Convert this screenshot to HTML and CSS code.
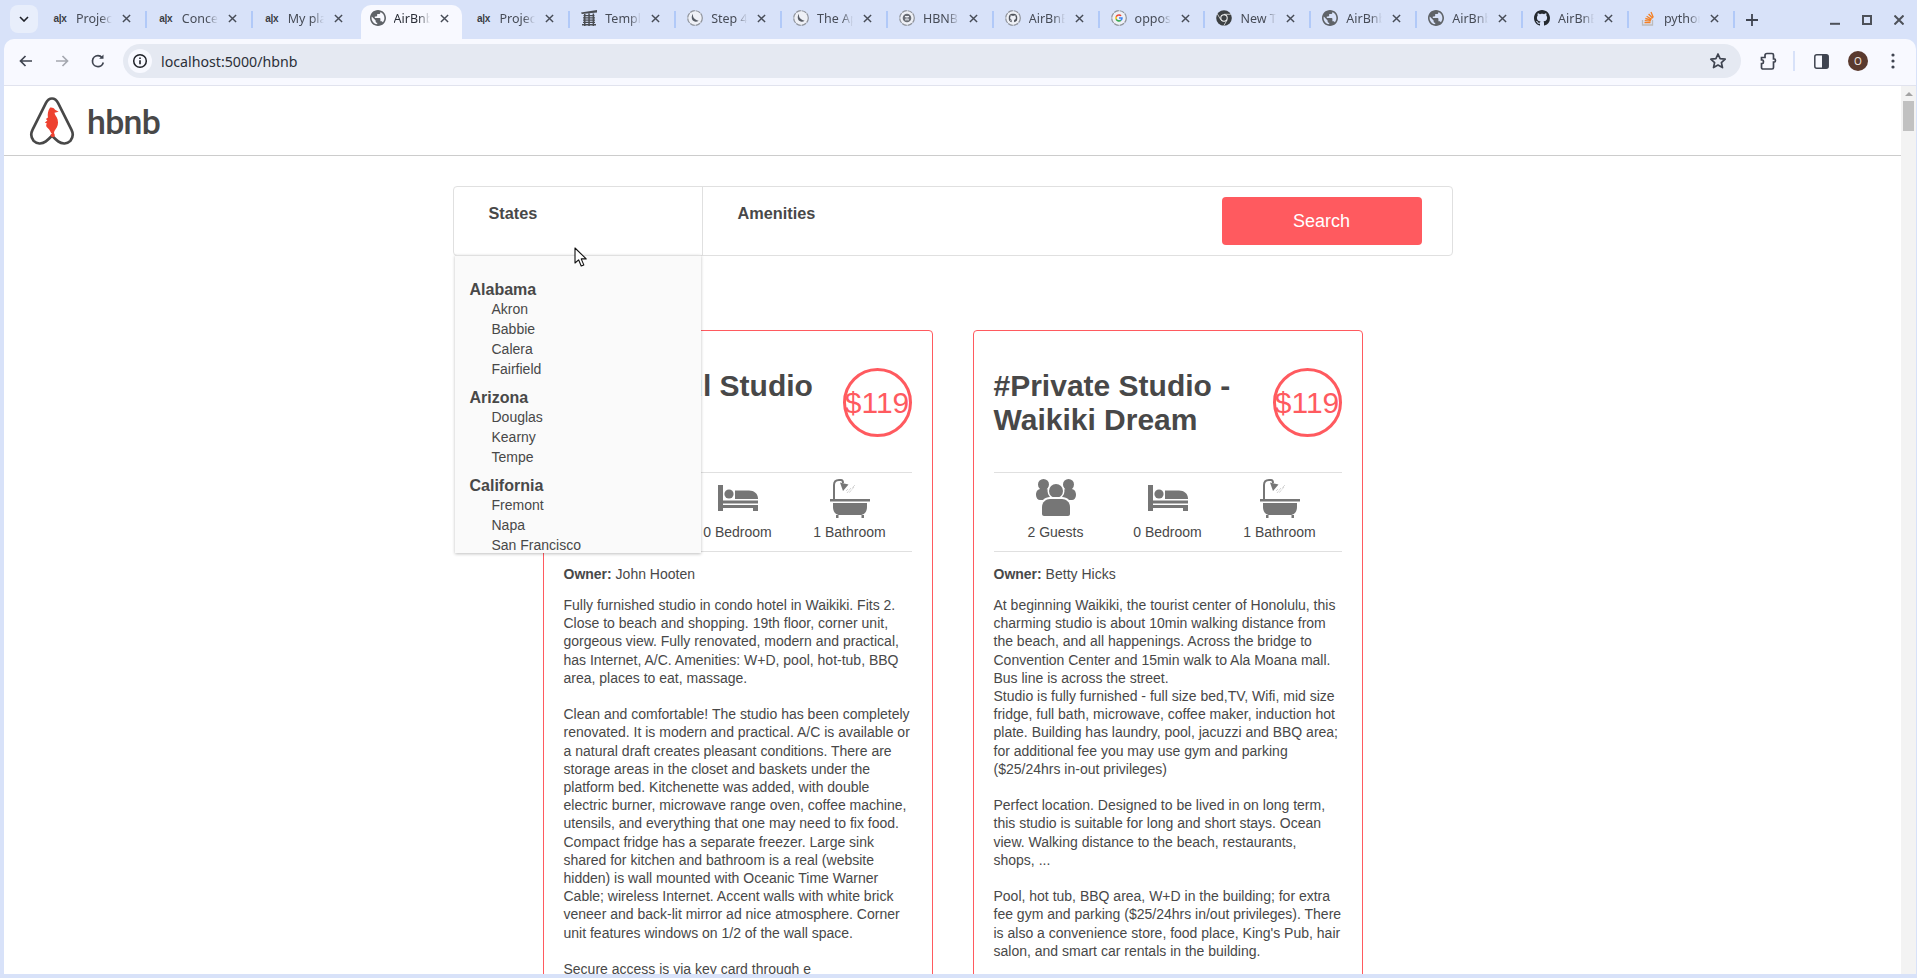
FILE: index.html
```html
<!DOCTYPE html>
<html lang="en">
<head>
  <meta charset="UTF-8">
  <title>HBnB</title>
  <link rel="stylesheet" href="styles.css">
</head>
<body>
  <!-- shared favicon shapes -->
  <svg class="sprite" width="0" height="0">
    <symbol id="globe" viewBox="2 2 20 20"><path fill-rule="evenodd" d="M12 2C6.48 2 2 6.48 2 12s4.48 10 10 10 10-4.48 10-10S17.52 2 12 2zm-1 17.93c-3.95-.49-7-3.85-7-7.93 0-.62.08-1.21.21-1.79L9 15v1c0 1.1.9 2 2 2v1.93zm6.9-2.54c-.26-.81-1-1.39-1.9-1.39h-1v-3c0-.55-.45-1-1-1H8v-2h2c.55 0 1-.45 1-1V7h2c1.1 0 2-.9 2-2v-.41c2.93 1.19 5 4.06 5 7.41 0 2.08-.8 3.97-2.1 5.39z"/></symbol>
    <symbol id="github" viewBox="0 0 16 16"><path d="M8 0C3.58 0 0 3.58 0 8c0 3.54 2.29 6.53 5.47 7.59.4.07.55-.17.55-.38 0-.19-.01-.82-.01-1.49-2.01.37-2.53-.49-2.69-.94-.09-.23-.48-.94-.82-1.13-.28-.15-.68-.52-.01-.53.63-.01 1.08.58 1.23.82.72 1.21 1.87.87 2.33.66.07-.52.28-.87.51-1.07-1.78-.2-3.64-.89-3.64-3.95 0-.87.31-1.59.82-2.15-.08-.2-.36-1.02.08-2.12 0 0 .67-.21 2.2.82.64-.18 1.32-.27 2-.27.68 0 1.36.09 2 .27 1.53-1.04 2.2-.82 2.2-.82.44 1.1.16 1.92.08 2.12.51.56.82 1.27.82 2.15 0 3.07-1.87 3.75-3.65 3.95.29.25.54.73.54 1.48 0 1.07-.01 1.93-.01 2.2 0 .21.15.46.55.38A8.013 8.013 0 0016 8c0-4.42-3.58-8-8-8z"/></symbol>
    <symbol id="ring" viewBox="0 0 16 16"><circle cx="8" cy="8" r="7.3" fill="#eef0f6" stroke="#8f939b" stroke-width="1.2" stroke-dasharray="5 .8"/></symbol>
    <symbol id="moon" viewBox="0 0 16 16"><use href="#ring"/><path d="M6 3.8c-.5 3 .9 6 5.6 6.9-2 1.6-5.2 1.2-6.4-1.2-.9-1.9-.4-4.4.8-5.7z" fill="#555a63"/></symbol>
    <symbol id="close" viewBox="0 0 10 10"><path d="M1 1l8 8M9 1l-8 8" fill="none" stroke="#474c57" stroke-width="1.6"/></symbol>
    <symbol id="guests" viewBox="0 0 40 40">
      <circle cx="7.5" cy="5.5" r="5.5"/><circle cx="32.5" cy="5.5" r="5.5"/>
      <path d="M0 16c0-4 2-6 5-6h5c2 0 4 2 4 5v6H4c-2 0-4-2-4-5zM40 16c0-4-2-6-5-6h-5c-2 0-4 2-4 5v6h10c2 0 4-2 4-5z"/>
      <circle cx="20" cy="12" r="8.5" fill="#fff"/><circle cx="20" cy="12" r="7"/>
      <path d="M4 37V28c0-6 5-10 10-10h12c5 0 10 4 10 10v9z" fill="#fff"/>
      <path d="M6 35V28c0-5 4-8 8-8h12c4 0 8 3 8 8v7c0 1-1 2-2 2H8c-1 0-2-1-2-2z"/>
    </symbol>
    <symbol id="bed" viewBox="0 0 40 40">
      <path d="M0 6h5v20h35v6h-5v-3H5v3H0z"/><circle cx="11" cy="15" r="4.6"/>
      <path d="M17 11.500h14c5 0 9 3 9 8v.5H17zM5 21.500h35v3H5z"/>
    </symbol>
    <symbol id="bath" viewBox="0 0 40 40">
      <path d="M0 20h40v2.500H0zM3 24h34v4c0 5-3 8-7 8H10c-4 0-7-3-7-8zM6 36h2.500v3H6zM31.500 36h2.500v3h-2.500z"/>
      <path d="M4 20V6c0-3 2-5 5-5h2c1 0 2 1 2 3" fill="none" stroke="#767676" stroke-width="2"/>
      <path fill="#767676" d="M10 3.500L18.500 5.500L13 12Z"/>
      <path d="M18 10l-2 2M21 9l-4 5M24 8l-5 6M25 6l-3 3" fill="none" stroke="#b5b5b5" stroke-width=".8" stroke-dasharray="1 .8"/>
    </symbol>
  </svg>

  <div class="tabstrip">
    <button class="tab-search"><svg width="10" height="6" viewBox="0 0 10 6"><path d="M1 1l4 4 4-4" fill="none" stroke="#1f2128" stroke-width="1.600"/></svg></button>
    <div class="tab"><span class="alx">a|x</span><span class="tab-title">Projec</span><svg class="tab-close"><use href="#close"/></svg></div>
    <div class="tab"><span class="alx">a|x</span><span class="tab-title">Conce</span><svg class="tab-close"><use href="#close"/></svg></div>
    <div class="tab no-line"><span class="alx">a|x</span><span class="tab-title">My pla</span><svg class="tab-close"><use href="#close"/></svg></div>
    <div class="tab active no-line"><svg class="favicon gray"><use href="#globe"/></svg><span class="tab-title">AirBnb</span><svg class="tab-close"><use href="#close"/></svg></div>
    <div class="tab"><span class="alx">a|x</span><span class="tab-title">Projec</span><svg class="tab-close"><use href="#close"/></svg></div>
    <div class="tab">
      <svg class="favicon" viewBox="0 0 16 16"><path fill="#4a4d52" d="M0 2.500L16 0v2.400L.8 4zM2.500 5h11v1.300h-11zM2 7.300h12v1.200H2zM2 9.500h12v1.200H2zM2 11.700h12v1.200H2zM1 14h14v1.600H1zM3 4h1.500v12H3zM7.300 3.500h1.500V16H7.300zM11.600 3.500h1.500V16h-1.500z"/></svg>
      <span class="tab-title">Templ</span><svg class="tab-close"><use href="#close"/></svg>
    </div>
    <div class="tab"><svg class="favicon"><use href="#moon"/></svg><span class="tab-title">Step 4</span><svg class="tab-close"><use href="#close"/></svg></div>
    <div class="tab"><svg class="favicon"><use href="#moon"/></svg><span class="tab-title">The Ap</span><svg class="tab-close"><use href="#close"/></svg></div>
    <div class="tab">
      <svg class="favicon" viewBox="0 0 16 16"><use href="#ring"/><circle cx="8" cy="8" r="4.300" fill="#6a6e75"/><path d="M6 6.500h4M6.500 8h3M6 9.800h4" stroke="#eef0f6" stroke-width="1"/></svg>
      <span class="tab-title">HBNB</span><svg class="tab-close"><use href="#close"/></svg>
    </div>
    <div class="tab">
      <svg class="favicon" viewBox="0 0 16 16"><use href="#ring"/><use href="#github" x="3.500" y="3.500" width="9" height="9" fill="#4f535a"/></svg>
      <span class="tab-title">AirBnB</span><svg class="tab-close"><use href="#close"/></svg>
    </div>
    <div class="tab">
      <svg class="favicon" viewBox="0 0 16 16"><use href="#ring"/><path d="M8 4.200a3.800 3.800 0 012.600 1L9.500 6.300A2.200 2.200 0 005.900 7.300L4.600 6.300A3.800 3.800 0 018 4.200z" fill="#ea4335"/><path d="M4.600 6.300l1.300 1a2.300 2.300 0 000 1.400l-1.300 1a3.800 3.800 0 010-3.400z" fill="#fbbc05"/><path d="M4.600 9.700l1.300-1A2.200 2.200 0 009.300 9.800l1.200 1A3.800 3.800 0 014.600 9.700z" fill="#34a853"/><path d="M8 7.300h3.700c.2 1.400-.2 2.600-1.200 3.500l-1.200-1c.4-.3.700-.6.800-1.100H8z" fill="#4285f4"/></svg>
      <span class="tab-title">oppos</span><svg class="tab-close"><use href="#close"/></svg>
    </div>
    <div class="tab">
      <svg class="favicon" viewBox="0 0 16 16"><circle cx="8" cy="8" r="7.800" fill="#3c4043"/><circle cx="8" cy="8" r="3.700" fill="#fff"/><circle cx="8" cy="8" r="2.700" fill="#3c4043"/><path d="M8 4.300h6.800M4.800 9.800L1.400 4M11.200 9.800L7.800 15.700" stroke="#fff" stroke-width=".7"/></svg>
      <span class="tab-title">New T</span><svg class="tab-close"><use href="#close"/></svg>
    </div>
    <div class="tab"><svg class="favicon gray"><use href="#globe"/></svg><span class="tab-title">AirBnb</span><svg class="tab-close"><use href="#close"/></svg></div>
    <div class="tab"><svg class="favicon gray"><use href="#globe"/></svg><span class="tab-title">AirBnb</span><svg class="tab-close"><use href="#close"/></svg></div>
    <div class="tab"><svg class="favicon dark"><use href="#github"/></svg><span class="tab-title">AirBnB</span><svg class="tab-close"><use href="#close"/></svg></div>
    <div class="tab">
      <svg class="favicon" viewBox="0 0 16 16"><path d="M2.500 10v5h10v-5" fill="none" stroke="#bcbbbb" stroke-width="1.300"/><path d="M4.500 12.700h6M4.700 10.600l6 .5M5.300 8.500l5.800 1.500M6.600 6.200l5.100 3M8.600 4l4.100 4.300M11 2l2.300 5.500" fill="none" stroke="#f48024" stroke-width="1.300"/></svg>
      <span class="tab-title">python</span><svg class="tab-close"><use href="#close"/></svg>
    </div>
    <svg class="new-tab" width="12" height="12" viewBox="0 0 12 12"><path d="M6 0v12M0 6h12" stroke="#3f4450" stroke-width="1.800"/></svg>
    <div class="win-buttons">
      <svg width="10" height="10" viewBox="0 0 10 10"><path d="M0 8.800h10" stroke="#4d5159" stroke-width="2"/></svg>
      <svg width="10" height="10" viewBox="0 0 10 10"><path d="M1 1h8v8H1z" fill="none" stroke="#4d5159" stroke-width="2"/></svg>
      <svg width="10" height="10" viewBox="0 0 10 10"><path d="M.5.500l9 9M9.500.500l-9 9" stroke="#4d5159" stroke-width="2"/></svg>
    </div>
  </div>

  <div class="toolbar">
    <svg class="nav-icon back" viewBox="0 0 16 16"><path d="M14 8H3M7.500 3L2.500 8l5 5" fill="none" stroke="#3f4450" stroke-width="1.700"/></svg>
    <svg class="nav-icon" viewBox="0 0 16 16"><path d="M2 8h11M8.500 3l5 5-5 5" fill="none" stroke="#a5a8b0" stroke-width="1.700"/></svg>
    <svg class="nav-icon reload" viewBox="0 0 16 16"><path d="M13.300 9.500A5.500 5.500 0 118 2.600c1.800 0 3.200.9 4.300 2.100" fill="none" stroke="#3f4450" stroke-width="1.700"/><path d="M13.500 1.500v4.300H9.200z" fill="#3f4450"/></svg>
    <div class="omnibox">
      <span class="site-info"><svg width="16" height="16" viewBox="0 0 16 16"><circle cx="8" cy="8" r="6.300" fill="none" stroke="#1f2128" stroke-width="1.500"/><path d="M8 7.200v4M8 4.500v1.500" stroke="#1f2128" stroke-width="1.600"/></svg></span>
      <span class="url">localhost:5000/hbnb</span>
      <svg class="star" width="18" height="18" viewBox="0 0 18 18"><path d="M9 2l2.100 4.700 5.100.5-3.800 3.400 1.100 5L9 13l-4.500 2.600 1.100-5-3.800-3.400 5.100-.5z" fill="none" stroke="#3f4450" stroke-width="1.700" stroke-linejoin="round"/></svg>
    </div>
    <svg class="ext" width="18" height="18" viewBox="0 0 18 18"><path d="M2.500 5.500h3.500V3.500c0-1.500 1-2 2-2H13c.8 0 1.500.7 1.500 1.500v4h1c1.300 0 1.300 3 0 3h-1v5.500c0 .8-.7 1.500-1.500 1.500H4c-.8 0-1.500-.7-1.500-1.500v-4h1c1.300 0 1.300-3.500 0-3.500h-1z" fill="none" stroke="#3f4450" stroke-width="1.700"/></svg>
    <span class="tool-sep"></span>
    <svg class="panel" width="15" height="15" viewBox="0 0 15 15"><rect x=".8" y=".8" width="13.400" height="13.400" rx="2" fill="none" stroke="#3f4450" stroke-width="1.500"/><rect x="8" y="1" width="6" height="13" fill="#3f4450"/></svg>
    <span class="avatar">O</span>
    <svg class="dots" width="4" height="16" viewBox="0 0 4 16"><circle cx="2" cy="2" r="1.600"/><circle cx="2" cy="8" r="1.600"/><circle cx="2" cy="14" r="1.600"/></svg>
  </div>

  <div class="viewport">
    <div class="page">
      <header class="site-header">
        <svg class="logo-mark" width="46" height="48" viewBox="0 0 44 47">
          <path d="M22 1.500C19 1.500 17.500 3 16 6L3 32C1 36 1.500 40 4 43C7 46 12 46.500 16 43.500C18 42 20 40 22 38C24 40 26 42 28 43.500C32 46.500 37 46 40 43C42.500 40 43 36 41 32L28 6C26.500 3 25 1.500 22 1.500Z" fill="none" stroke="#484848" stroke-width="2.600"/>
          <path d="M20 10.500C22 10 24 11 25 12.500L28.500 14.500L24.500 15.500C24.500 17.500 26.500 19 27.500 22C28.500 26 27.500 29 25.500 31.500C24 33.500 23.500 35 24.500 36.500C25.500 38.500 23.500 40 21.500 39C19.800 38 20.500 35.800 22 36.200C20.500 34.500 20 32 17.500 30C16 28.800 16 27.500 17 26L15 25L17.500 23L16 21.500L18 20C17.500 17 18 13 20 10.500Z" fill="#ee4130"/>
        </svg>
        <span class="logo-text">hbnb</span>
      </header>

      <section class="filters">
        <div class="locations">
          <h3>States</h3>
          <div class="popover">
            <h4>Alabama</h4>
            <ul>
              <li>Akron</li>
              <li>Babbie</li>
              <li>Calera</li>
              <li>Fairfield</li>
            </ul>
            <h4>Arizona</h4>
            <ul>
              <li>Douglas</li>
              <li>Kearny</li>
              <li>Tempe</li>
            </ul>
            <h4>California</h4>
            <ul>
              <li>Fremont</li>
              <li>Napa</li>
              <li>San Francisco</li>
            </ul>
          </div>
        </div>
        <div class="amenities">
          <h3>Amenities</h3>
        </div>
        <button class="search-btn">Search</button>
        <svg class="cursor" width="14" height="21" viewBox="0 0 14 21"><path d="M1 1v15l3.600-3.200 2.600 6.200 2.600-1.100-2.600-6h5z" fill="#fff" stroke="#111" stroke-width="1.100" stroke-linejoin="round"/></svg>
      </section>

      <section class="places">
        <article class="place">
          <div class="title-box">
            <h2>Wonderful Studio</h2>
            <div class="price">$119</div>
          </div>
          <div class="information">
            <div class="info-item"><svg class="info-icon"><use href="#guests"/></svg>2 Guests</div>
            <div class="info-item"><svg class="info-icon"><use href="#bed"/></svg>0 Bedroom</div>
            <div class="info-item"><svg class="info-icon"><use href="#bath"/></svg>1 Bathroom</div>
          </div>
          <div class="user"><b>Owner:</b> John Hooten</div>
          <div class="description">
            Fully furnished studio in condo hotel in Waikiki. Fits 2. Close to beach and shopping. 19th floor, corner unit, gorgeous view. Fully renovated, modern and practical, has Internet, A/C. Amenities: W+D, pool, hot-tub, BBQ area, places to eat, massage.<br><br>
            Clean and comfortable! The studio has been completely renovated. It is modern and practical. A/C is available or a natural draft creates pleasant conditions. There are storage areas in the closet and baskets under the platform bed. Kitchenette was added, with double electric burner, microwave range oven, coffee machine, utensils, and everything that one may need to fix food. Compact fridge has a separate freezer. Large sink shared for kitchen and bathroom is a real (website hidden) is wall mounted with Oceanic Time Warner Cable; wireless Internet. Accent walls with white brick veneer and back-lit mirror ad nice atmosphere. Corner unit features windows on 1/2 of the wall space.<br><br>
            Secure access is via key card through e
          </div>
        </article>

        <article class="place">
          <div class="title-box">
            <h2>#Private Studio - Waikiki Dream</h2>
            <div class="price">$119</div>
          </div>
          <div class="information">
            <div class="info-item"><svg class="info-icon"><use href="#guests"/></svg>2 Guests</div>
            <div class="info-item"><svg class="info-icon"><use href="#bed"/></svg>0 Bedroom</div>
            <div class="info-item"><svg class="info-icon"><use href="#bath"/></svg>1 Bathroom</div>
          </div>
          <div class="user"><b>Owner:</b> Betty Hicks</div>
          <div class="description">
            At beginning Waikiki, the tourist center of Honolulu, this charming studio is about 10min walking distance from the beach, and all happenings. Across the bridge to Convention Center and 15min walk to Ala Moana mall. Bus line is across the street.<br>
            Studio is fully furnished - full size bed,TV, Wifi, mid size fridge, full bath, microwave, coffee maker, induction hot plate. Building has laundry, pool, jacuzzi and BBQ area; for additional fee you may use gym and parking ($25/24hrs in-out privileges)<br><br>
            Perfect location. Designed to be lived in on long term, this studio is suitable for long and short stays. Ocean view. Walking distance to the beach, restaurants, shops, ...<br><br>
            Pool, hot tub, BBQ area, W+D in the building; for extra fee gym and parking ($25/24hrs in/out privileges). There is also a convenience store, food place, King's Pub, hair salon, and smart car rentals in the building.
          </div>
        </article>
      </section>
    </div>

    <div class="scrollbar">
      <span class="scroll-arrow"></span>
      <span class="scroll-thumb"></span>
    </div>
  </div>
</body>
</html>
```

FILE: styles.css
```css
* {
  box-sizing: border-box;
}

html, body {
  height: 100%;
}

body {
  margin: 0;
  height: 978px;
  overflow: hidden;
  display: flex;
  flex-direction: column;
  background-color: #d8e2f9;
  font-family: "Liberation Sans", Arial, sans-serif;
  color: #484848;
}

.sprite {
  position: absolute;
}

/* browser chrome */
.tabstrip {
  height: 39px;
  flex-shrink: 0;
  display: flex;
  align-items: stretch;
  padding-left: 10px;
  font-family: "Noto Sans", sans-serif;
}

.tab-search {
  width: 28px;
  height: 28px;
  margin: 5px 3px 0 0;
  padding: 0;
  border: none;
  border-radius: 8px;
  background-color: #e8eefb;
  display: flex;
  align-items: center;
  justify-content: center;
}

.tab {
  width: 105.87px;
  flex-shrink: 0;
  display: flex;
  align-items: center;
  padding-left: 11px;
  padding-bottom: 3px;
  position: relative;
  font-size: 12.5px;
  color: #474c57;
}

.tab::after {
  content: "";
  position: absolute;
  right: 0;
  top: 11px;
  width: 2px;
  height: 17px;
  background-color: #b1c9f8;
}

.tab.no-line::after {
  display: none;
}

.tab.active {
  margin: 5px 2px 0;
  width: 101.87px;
  padding-left: 9px;
  padding-bottom: 8px;
  border-radius: 10px 10px 0 0;
  background-color: #f8f9ff;
  color: #2b2f38;
}

.favicon {
  width: 16px;
  height: 16px;
  flex-shrink: 0;
}

.favicon.gray {
  fill: #5f6368;
}

.favicon.dark {
  fill: #24292f;
}

.alx {
  width: 16px;
  flex-shrink: 0;
  font-family: "Liberation Sans", sans-serif;
  font-size: 10px;
  font-weight: bold;
  letter-spacing: -0.3px;
  text-align: center;
  color: #3a3d44;
}

.tab-title {
  width: 41px;
  margin-left: 8px;
  overflow: hidden;
  white-space: nowrap;
  -webkit-mask-image: linear-gradient(to right, #000 60%, transparent 88%);
  mask-image: linear-gradient(to right, #000 60%, transparent 88%);
}

.tab-close {
  width: 9px;
  height: 9px;
  margin-left: 5px;
  flex-shrink: 0;
}

.new-tab {
  align-self: center;
  margin-left: 11px;
}

.win-buttons {
  margin-left: auto;
  padding-right: 13px;
  display: flex;
  align-items: center;
  gap: 22px;
}

.toolbar {
  height: 47px;
  flex-shrink: 0;
  margin-left: 4px;
  margin-right: 1px;
  padding-left: 13px;
  padding-bottom: 2px;
  display: flex;
  align-items: center;
  background-color: #f8f9ff;
  border-bottom: 1px solid #e1e3ee;
  border-radius: 10px 10px 0 0;
}

.nav-icon {
  width: 16px;
  height: 16px;
  margin-right: 21px;
  flex-shrink: 0;
}

.nav-icon.back {
  margin-left: 1px;
  margin-right: 20px;
}

.nav-icon.reload {
  margin-left: -1px;
  margin-right: 22px;
}

.omnibox {
  width: 1618px;
  height: 34px;
  margin-left: -5px;
  padding: 0 14px 0 5px;
  display: flex;
  align-items: center;
  border-radius: 17px;
  background-color: #e5e9f2;
  font-family: "Noto Sans", sans-serif;
  font-size: 14.2px;
  color: #2b2f38;
}

.site-info {
  width: 24px;
  height: 24px;
  border-radius: 50%;
  background-color: #f8f9ff;
  display: flex;
  align-items: center;
  justify-content: center;
}

.url {
  margin-left: 9px;
}

.star {
  margin-left: auto;
}

.ext {
  margin-left: 18px;
}

.tool-sep {
  width: 2px;
  height: 20px;
  margin-left: 16px;
  background-color: #d8e2f9;
}

.panel {
  margin-left: 19px;
}

.avatar {
  width: 20px;
  height: 20px;
  margin-left: 19px;
  border-radius: 50%;
  background-color: #5a3a2e;
  color: #f4e9e2;
  font-family: "Noto Sans", sans-serif;
  font-size: 10px;
  line-height: 20px;
  text-align: center;
}

.dots {
  margin-left: 23px;
  fill: #3f4450;
}

.viewport {
  height: 888px;
  flex-shrink: 0;
  margin-left: 4px;
  margin-right: 1px;
  display: flex;
  overflow: hidden;
  background-color: #ffffff;
}

.page {
  flex: 1;
  min-width: 0;
}

.scrollbar {
  width: 15px;
  flex-shrink: 0;
  padding-top: 6px;
  background-color: #f3f3f3;
  display: flex;
  flex-direction: column;
  align-items: center;
}

.scroll-arrow {
  width: 0;
  height: 0;
  border-left: 4px solid transparent;
  border-right: 4px solid transparent;
  border-bottom: 4px solid #a3a3a3;
}

.scroll-thumb {
  width: 11px;
  height: 30px;
  margin-top: 5px;
  background-color: #c1c1c1;
}

/* hbnb page */
.site-header {
  height: 70px;
  padding: 11px 0 0 25px;
  display: flex;
  align-items: flex-start;
  border-bottom: 1px solid #cccccc;
}

.logo-text {
  margin: 1px 0 0 12px;
  font-family: Roboto, sans-serif;
  font-size: 34px;
  font-weight: 500;
  letter-spacing: -0.7px;
  line-height: 48px;
  color: #484848;
}

.filters {
  width: 1000px;
  height: 70px;
  margin: 30px auto 0;
  display: flex;
  align-items: center;
  position: relative;
  border: 1px solid #e0e0e0;
  border-radius: 4px;
  background-color: #ffffff;
}

.filters h3 {
  margin: 0;
  font-size: 16.3px;
  line-height: 18px;
  color: #484848;
}

.locations, .amenities {
  align-self: stretch;
  padding: 17px 0 0 35px;
}

.locations {
  width: 249px;
  position: relative;
  border-right: 1px solid #e0e0e0;
}

.amenities {
  flex: 1;
}

.popover {
  position: absolute;
  top: 100%;
  left: 1px;
  width: 246px;
  height: 298px;
  padding: 24px 15px 0;
  overflow: hidden;
  z-index: 5;
  background-color: #fafafa;
  border-top: 1px solid #e0e0e0;
  box-shadow: 0 1px 3px rgba(0, 0, 0, 0.25);
}

.popover h4 {
  margin: 0;
  font-size: 16px;
  line-height: 19px;
  color: #484848;
}

.popover ul {
  list-style: none;
  margin: 0 0 9px;
  padding: 0 0 0 22px;
}

.popover li {
  font-size: 14px;
  line-height: 20px;
}

.search-btn {
  width: 200px;
  height: 48px;
  margin-right: 30px;
  border: none;
  border-radius: 4px;
  background-color: #ff5a5f;
  color: #ffffff;
  font-family: inherit;
  font-size: 18px;
  cursor: pointer;
}

.cursor {
  position: absolute;
  left: 120px;
  top: 60px;
  z-index: 6;
}

.places {
  width: 820px;
  margin: 74px auto 0;
  display: flex;
  gap: 40px;
}

.place {
  width: 390px;
  min-height: 760px;
  padding: 20px;
  border: 1px solid #ff5a5f;
  border-radius: 4px;
  font-size: 14px;
}

.title-box {
  height: 121px;
  padding-top: 18px;
  display: flex;
  justify-content: space-between;
  align-items: flex-start;
}

.title-box h2 {
  width: 250px;
  margin: 0;
  font-size: 30px;
  line-height: 34px;
  color: #484848;
}

.price {
  width: 69px;
  height: 69px;
  margin-top: -1px;
  flex-shrink: 0;
  border: 3px solid #ff5a5f;
  border-radius: 50%;
  color: #ff5a5f;
  font-size: 30px;
  line-height: 63px;
  white-space: nowrap;
  display: flex;
  justify-content: center;
}

.information {
  height: 80px;
  padding-top: 6px;
  display: flex;
  justify-content: center;
  border-top: 1px solid #e0e0e0;
  border-bottom: 1px solid #e0e0e0;
}

.info-item {
  width: 112px;
  display: flex;
  flex-direction: column;
  align-items: center;
  line-height: 18px;
}

.info-icon {
  width: 40px;
  height: 40px;
  margin-bottom: 4px;
  fill: #767676;
  color: #767676;
}

.user {
  margin-top: 13px;
  line-height: 18px;
}

.description {
  margin-top: 13px;
  line-height: 18.2px;
}
```
